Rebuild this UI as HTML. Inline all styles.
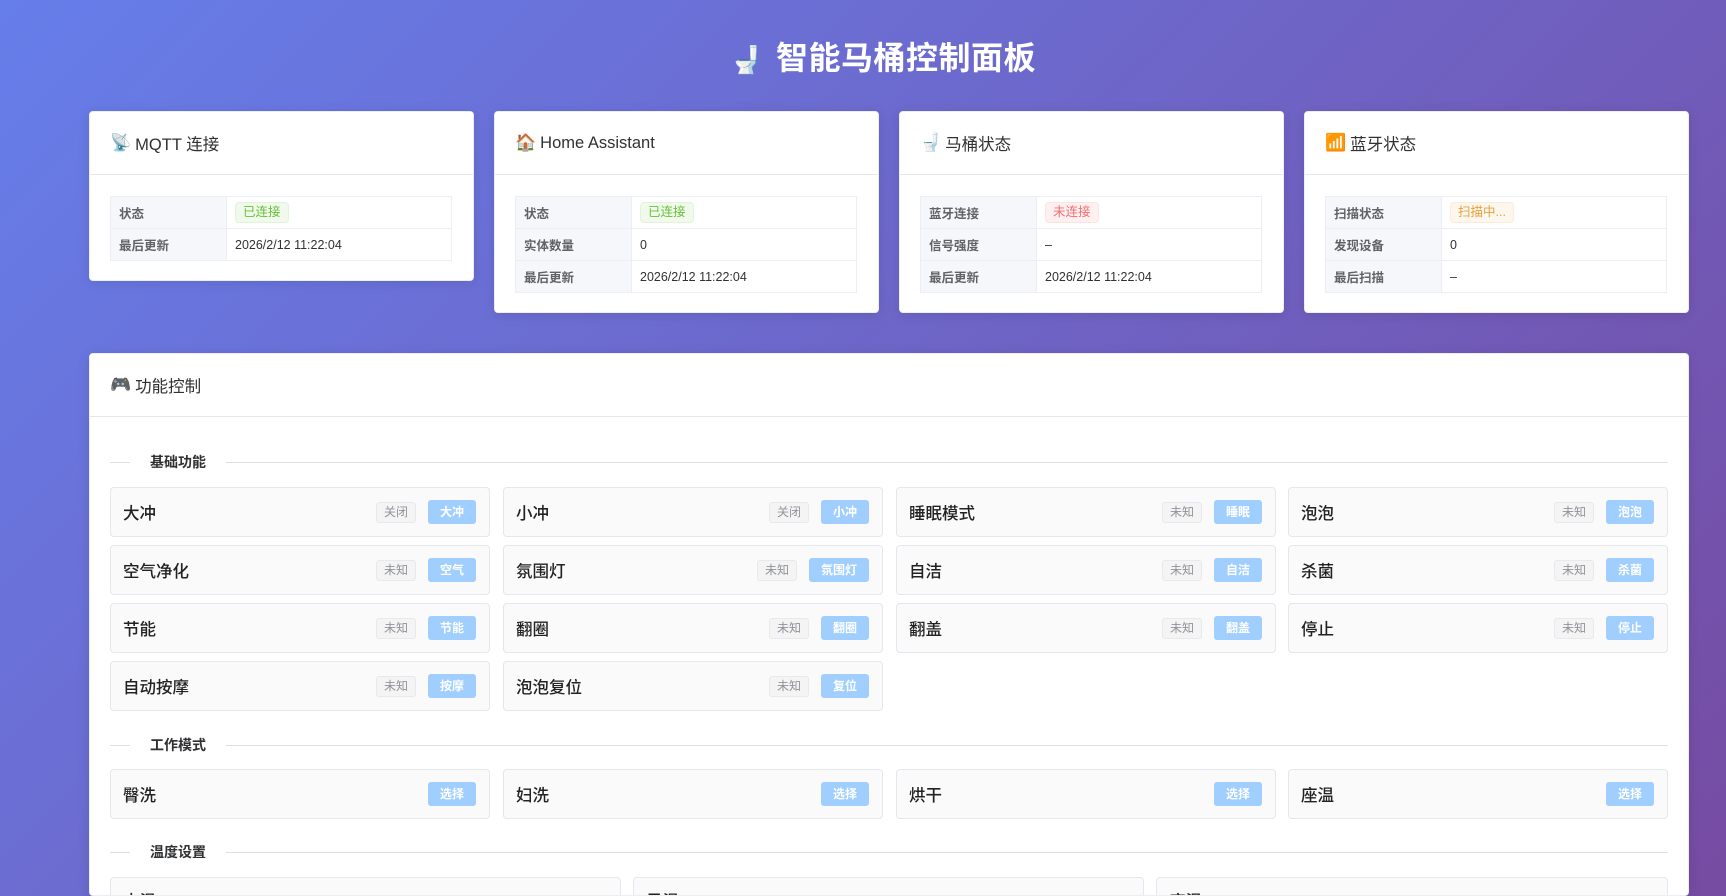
<!DOCTYPE html>
<html><head><meta charset="utf-8"><style>
*{box-sizing:border-box;margin:0;padding:0}
html,body{width:1726px;height:896px;overflow:hidden}
body{background:linear-gradient(135deg,#667eea 0%,#764ba2 100%);font-family:"Liberation Sans","Noto Sans CJK SC",sans-serif;color:#303133;position:relative}
h1{position:absolute;top:36px;left:0;width:1726px;padding-left:40px;text-align:center;color:#fff;font-size:32px;font-weight:bold;line-height:44px;letter-spacing:0.5px}
h1 .e{font-size:27px;margin-right:12px}
.card{position:absolute;background:#fff;border-radius:4px;border:1px solid #ebeef5;box-shadow:0 2px 12px rgba(0,0,0,.1)}
.hd{height:63px;border-bottom:1px solid #e4e7ed;padding:0 20px;display:flex;align-items:center;font-size:16.5px;color:#303133}
.hd .e{font-size:17px;margin-right:4px}
table{position:absolute;left:20px;top:84px;width:342px;border-collapse:collapse;font-size:12.5px}
td{border:1px solid #ebeef5;height:32px;padding:0 8px;color:#303133}
td.l{width:116px;background:#f5f7fa;font-weight:bold;color:#606266}
.tag{display:inline-block;font-size:12.5px;padding:0 7px;height:21px;line-height:19px;border-radius:4px;border:1px solid}
.g{background:#f0f9eb;border-color:#e1f3d8;color:#67c23a}
.r{background:#fef0f0;border-color:#fde2e2;color:#f56c6c}
.o{background:#fdf6ec;border-color:#faecd8;color:#e6a23c}
.div{position:absolute;left:20px;right:20px;height:1px;background:#dcdfe6}
.div span{position:absolute;left:20px;top:-10px;background:#fff;padding:0 20px;font-size:14px;font-weight:bold;color:#303133;line-height:20px}
.it{position:absolute;width:380px;height:50px;background:#fafafa;border:1px solid #e4e7ed;border-radius:4px;display:flex;align-items:center;padding:0 13px 0 12px;font-size:16.5px;color:#303133}
.it .n{flex:1;font-weight:500;color:#222}
.it .s{font-size:12px;color:#909399;background:#f4f4f5;border:1px solid #e9e9eb;border-radius:3px;height:21px;line-height:19px;padding:0 7px;margin-right:12px}
.it .b{font-size:12px;color:#fff;background:#a0cfff;border-radius:3px;height:24px;line-height:24px;padding:0 12px;font-weight:bold}
</style></head><body>
<h1><span class="e">🚽</span>智能马桶控制面板</h1>

<div class="card" style="left:89px;top:111px;width:385px;height:170px">
<div class="hd"><span class="e">📡</span>MQTT 连接</div>
<table><tr><td class="l">状态</td><td><span class="tag g">已连接</span></td></tr>
<tr><td class="l">最后更新</td><td>2026/2/12 11:22:04</td></tr></table></div>

<div class="card" style="left:494px;top:111px;width:385px;height:202px">
<div class="hd"><span class="e">🏠</span>Home Assistant</div>
<table><tr><td class="l">状态</td><td><span class="tag g">已连接</span></td></tr>
<tr><td class="l">实体数量</td><td>0</td></tr>
<tr><td class="l">最后更新</td><td>2026/2/12 11:22:04</td></tr></table></div>

<div class="card" style="left:899px;top:111px;width:385px;height:202px">
<div class="hd"><span class="e">🚽</span>马桶状态</div>
<table><tr><td class="l">蓝牙连接</td><td><span class="tag r">未连接</span></td></tr>
<tr><td class="l">信号强度</td><td>–</td></tr>
<tr><td class="l">最后更新</td><td>2026/2/12 11:22:04</td></tr></table></div>

<div class="card" style="left:1304px;top:111px;width:385px;height:202px">
<div class="hd"><span class="e">📶</span>蓝牙状态</div>
<table><tr><td class="l">扫描状态</td><td><span class="tag o">扫描中...</span></td></tr>
<tr><td class="l">发现设备</td><td>0</td></tr>
<tr><td class="l">最后扫描</td><td>–</td></tr></table></div>

<div class="card" style="left:89px;top:353px;width:1600px;height:543px;overflow:hidden">
<div class="hd"><span class="e">🎮</span>功能控制</div>
<div class="div" style="top:108px"><span>基础功能</span></div>
<div class="div" style="top:391px"><span>工作模式</span></div>
<div class="div" style="top:498px"><span>温度设置</span></div>

<div class="it" style="left:20px;top:133px"><span class="n">大冲</span><span class="s">关闭</span><span class="b">大冲</span></div>
<div class="it" style="left:413px;top:133px"><span class="n">小冲</span><span class="s">关闭</span><span class="b">小冲</span></div>
<div class="it" style="left:806px;top:133px"><span class="n">睡眠模式</span><span class="s">未知</span><span class="b">睡眠</span></div>
<div class="it" style="left:1198px;top:133px"><span class="n">泡泡</span><span class="s">未知</span><span class="b">泡泡</span></div>

<div class="it" style="left:20px;top:191px"><span class="n">空气净化</span><span class="s">未知</span><span class="b">空气</span></div>
<div class="it" style="left:413px;top:191px"><span class="n">氛围灯</span><span class="s">未知</span><span class="b">氛围灯</span></div>
<div class="it" style="left:806px;top:191px"><span class="n">自洁</span><span class="s">未知</span><span class="b">自洁</span></div>
<div class="it" style="left:1198px;top:191px"><span class="n">杀菌</span><span class="s">未知</span><span class="b">杀菌</span></div>

<div class="it" style="left:20px;top:249px"><span class="n">节能</span><span class="s">未知</span><span class="b">节能</span></div>
<div class="it" style="left:413px;top:249px"><span class="n">翻圈</span><span class="s">未知</span><span class="b">翻圈</span></div>
<div class="it" style="left:806px;top:249px"><span class="n">翻盖</span><span class="s">未知</span><span class="b">翻盖</span></div>
<div class="it" style="left:1198px;top:249px"><span class="n">停止</span><span class="s">未知</span><span class="b">停止</span></div>

<div class="it" style="left:20px;top:307px"><span class="n">自动按摩</span><span class="s">未知</span><span class="b">按摩</span></div>
<div class="it" style="left:413px;top:307px"><span class="n">泡泡复位</span><span class="s">未知</span><span class="b">复位</span></div>

<div class="it" style="left:20px;top:415px"><span class="n">臀洗</span><span class="b">选择</span></div>
<div class="it" style="left:413px;top:415px"><span class="n">妇洗</span><span class="b">选择</span></div>
<div class="it" style="left:806px;top:415px"><span class="n">烘干</span><span class="b">选择</span></div>
<div class="it" style="left:1198px;top:415px"><span class="n">座温</span><span class="b">选择</span></div>

<div class="it" style="left:20px;top:523px;width:511px;align-items:flex-start;padding-top:10px"><span class="n">水温</span></div>
<div class="it" style="left:543px;top:523px;width:511px;align-items:flex-start;padding-top:10px"><span class="n">风温</span></div>
<div class="it" style="left:1066px;top:523px;width:512px;align-items:flex-start;padding-top:10px"><span class="n">座温</span></div>
</div>
</body></html>
